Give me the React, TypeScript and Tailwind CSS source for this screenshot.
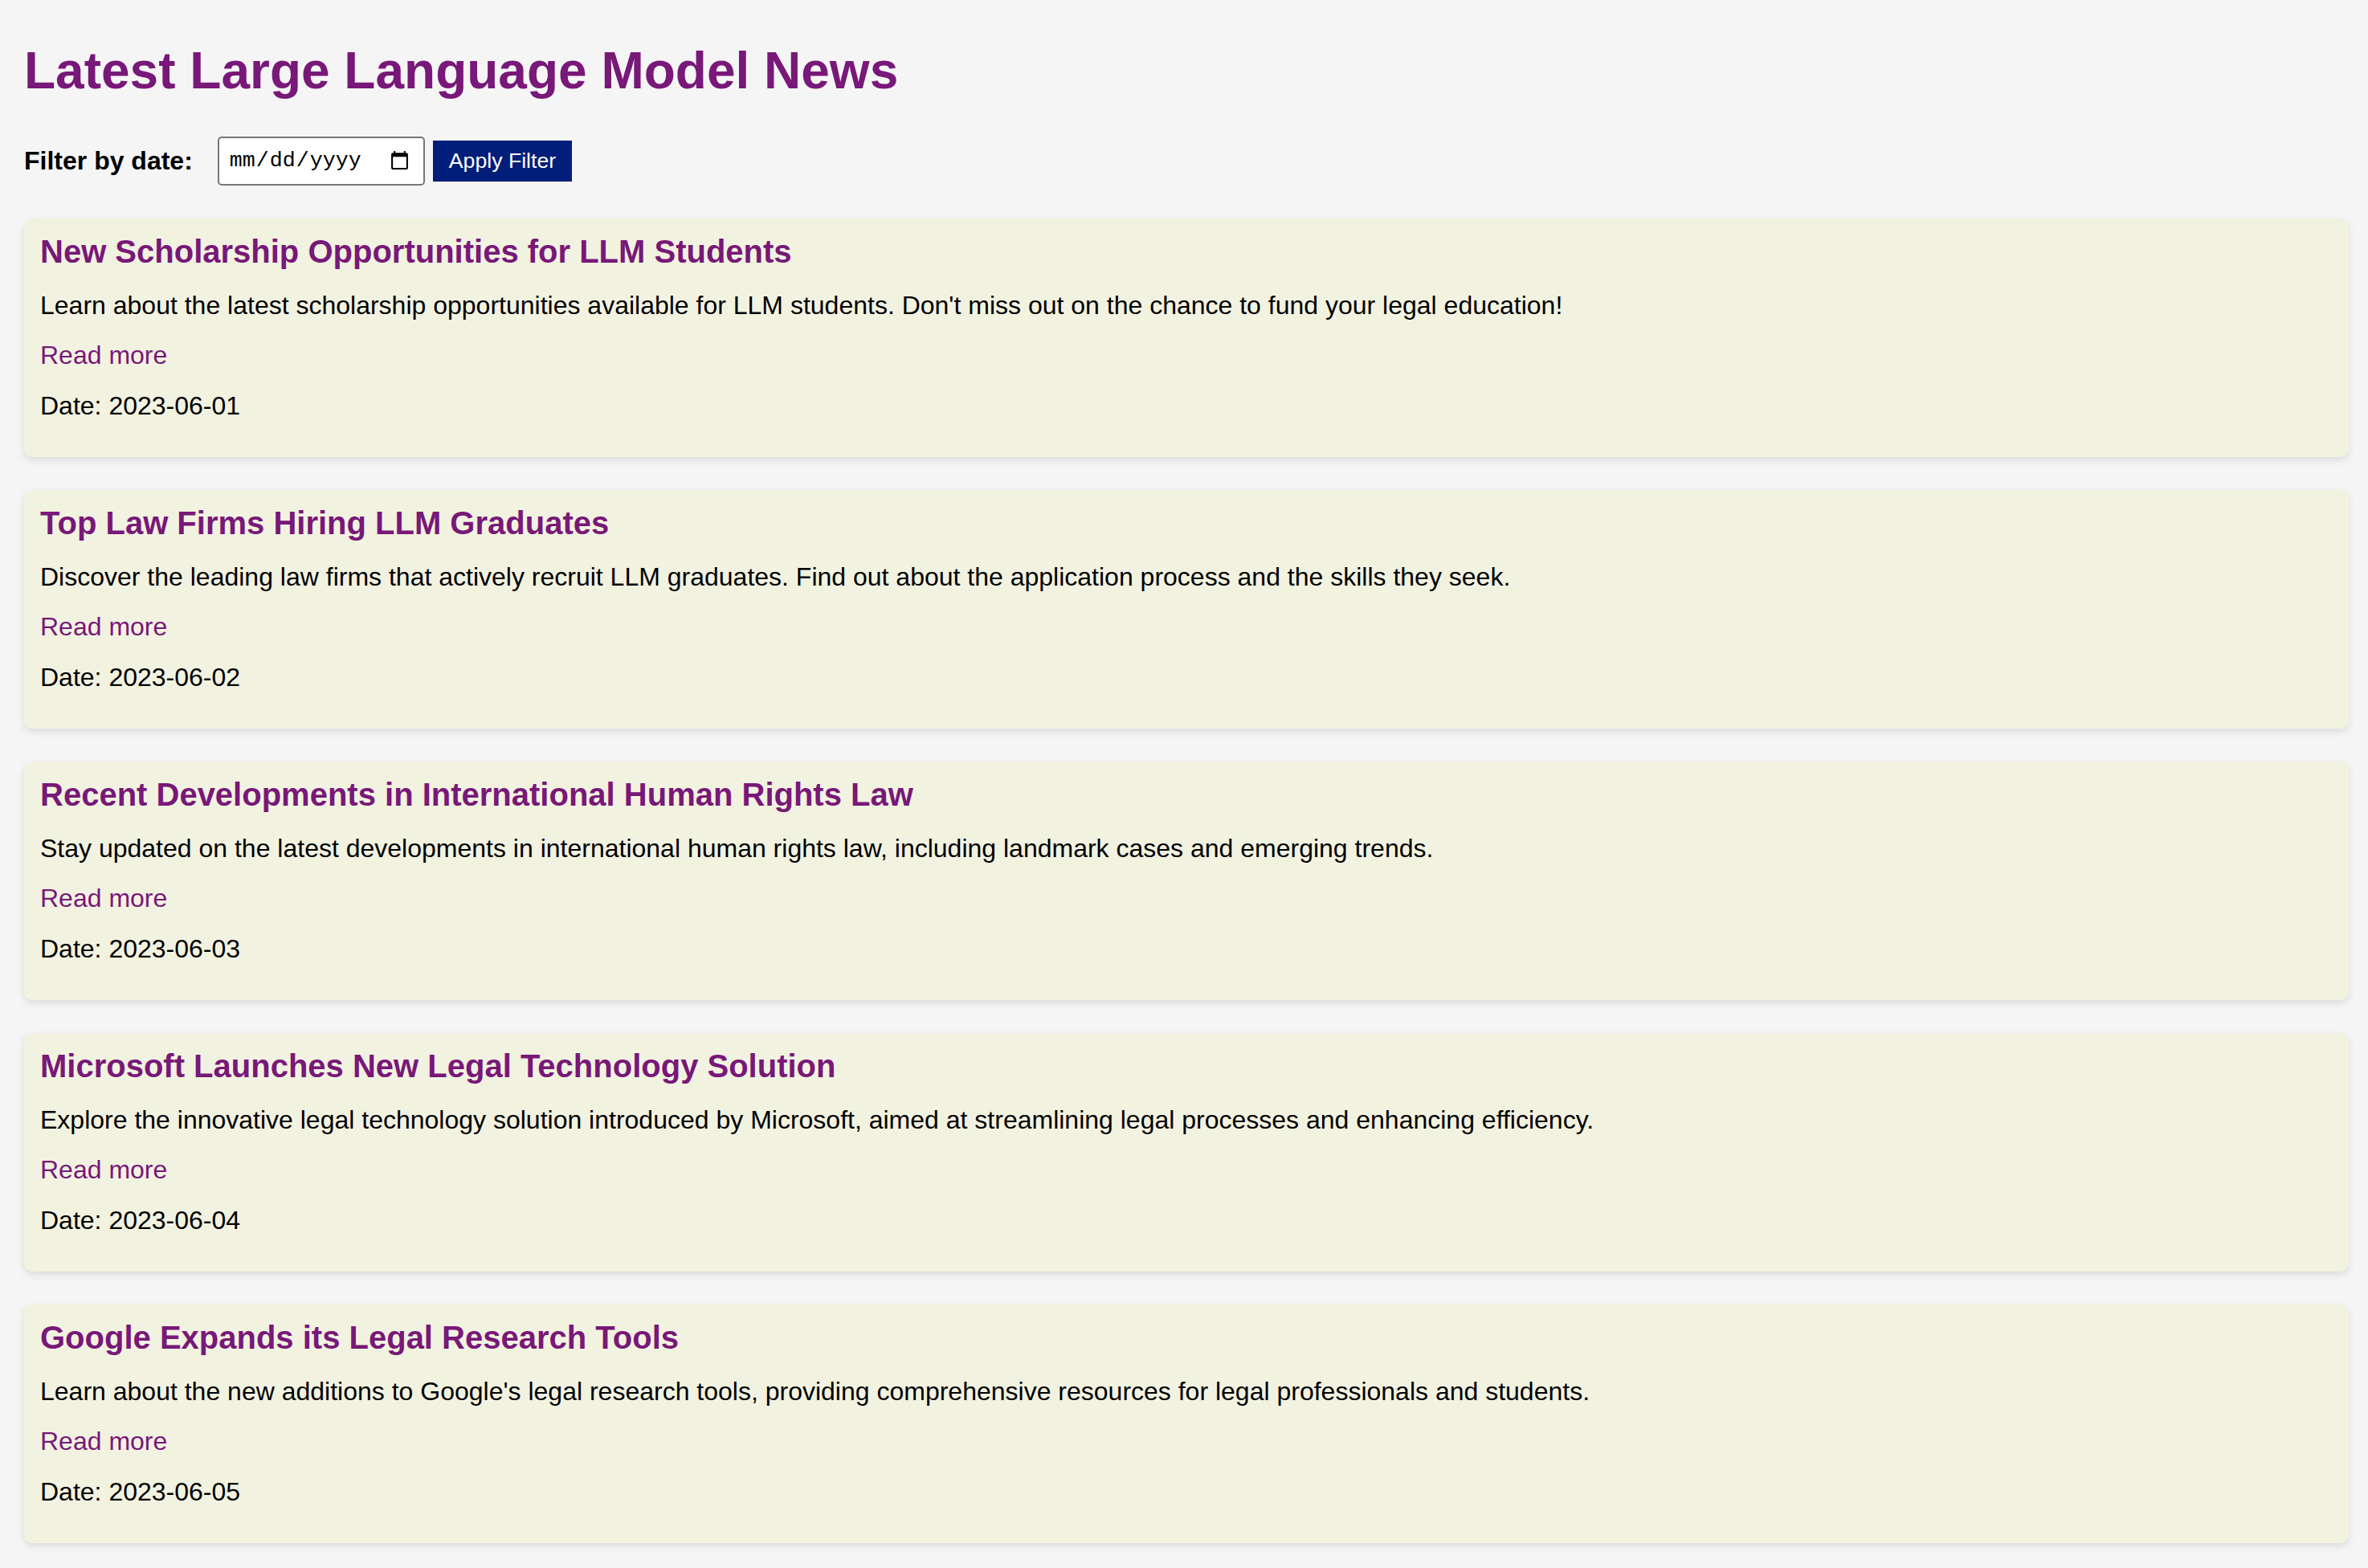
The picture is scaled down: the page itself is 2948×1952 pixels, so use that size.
const news = [
  {
    title: 'New Scholarship Opportunities for LLM Students',
    text: "Learn about the latest scholarship opportunities available for LLM students. Don't miss out on the chance to fund your legal education!",
    date: '2023-06-01',
  },
  {
    title: 'Top Law Firms Hiring LLM Graduates',
    text: 'Discover the leading law firms that actively recruit LLM graduates. Find out about the application process and the skills they seek.',
    date: '2023-06-02',
  },
  {
    title: 'Recent Developments in International Human Rights Law',
    text: 'Stay updated on the latest developments in international human rights law, including landmark cases and emerging trends.',
    date: '2023-06-03',
  },
  {
    title: 'Microsoft Launches New Legal Technology Solution',
    text: 'Explore the innovative legal technology solution introduced by Microsoft, aimed at streamlining legal processes and enhancing efficiency.',
    date: '2023-06-04',
  },
  {
    title: 'Google Expands its Legal Research Tools',
    text: "Learn about the new additions to Google's legal research tools, providing comprehensive resources for legal professionals and students.",
    date: '2023-06-05',
  },
]

export default function App() {
  return (
    <div
      className="min-h-screen bg-[#f5f5f5] pl-[30px] pr-[24px] pt-[52px] pb-[30px] text-black"
      style={{ fontFamily: '"Liberation Sans", Arial, sans-serif' }}
    >
      <h1 className="text-[64px] leading-[73.5px] font-bold text-[#781878]">
        Latest Large Language Model News
      </h1>

      {/* Filter */}
      <div className="mt-[44px] flex items-center">
        <label className="text-[32px] leading-[37px] font-bold mr-[31px]">Filter by date:</label>
        <input
          type="date"
          className="w-[258px] h-[61px] bg-white border-2 border-[#767676] rounded-[5px] pl-[12px] pr-[14px] text-[26.67px] text-black"
          style={{ fontFamily: '"Liberation Mono", "Courier New", monospace' }}
        />
        <button className="ml-[10px] h-[51px] px-[20px] bg-[#011e7a] text-white text-[26.67px] leading-[31px]">
          Apply Filter
        </button>
      </div>

      {/* News list */}
      <div className="mt-[41px] flex flex-col gap-[41px]">
        {news.map((item) => (
          <div
            key={item.date}
            className="bg-[#f2f2e1] rounded-[10px] shadow-[0_4px_10px_rgba(0,0,0,0.1)] pt-[18px] pb-[45px] px-[20px]"
          >
            <h2 className="text-[40px] leading-[46px] font-bold text-[#781878]">{item.title}</h2>
            <p className="mt-[26px] text-[32px] leading-[37px]">{item.text}</p>
            <a href="#" className="block mt-[25px] text-[32px] leading-[37px] text-[#781878]">
              Read more
            </a>
            <p className="mt-[26px] text-[32px] leading-[37px]">Date: {item.date}</p>
          </div>
        ))}
      </div>
    </div>
  )
}
